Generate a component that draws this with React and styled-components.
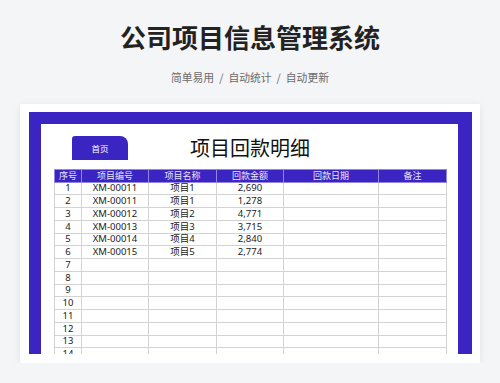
import styled, { createGlobalStyle } from "styled-components";

const GlobalStyle = createGlobalStyle`
    html, body{
        margin: 0;
        background: #f4f5f7;
        font-family: "Noto Sans", "Noto Sans CJK SC", sans-serif;
    }
`

const rows = [
    ["1", "XM-00011", "项目1", "2,690"],
    ["2", "XM-00011", "项目1", "1,278"],
    ["3", "XM-00012", "项目2", "4,771"],
    ["4", "XM-00013", "项目3", "3,715"],
    ["5", "XM-00014", "项目4", "2,840"],
    ["6", "XM-00015", "项目5", "2,774"],
]

const columns = [
    { name: "序号", width: 27 },
    { name: "项目编号", width: 67 },
    { name: "项目名称", width: 68 },
    { name: "回款金额", width: 67 },
    { name: "回款日期", width: 95 },
    { name: "备注", width: 68 },
]

const App = () => {
    const all = [...rows]
    for (let i = 7; i <= 14; i++) all.push([String(i), "", "", ""])

    return (
        <>
            <GlobalStyle />
            <Header>
                <h1>公司项目信息管理系统</h1>
                <Tags>
                    <span>简单易用</span>
                    <Slash>/</Slash>
                    <span>自动统计</span>
                    <Slash>/</Slash>
                    <span>自动更新</span>
                </Tags>
            </Header>

            <Card>
                <Frame>
                    <Inner>
                        <TitleRow>
                            <HomeTab>首页</HomeTab>
                            <h2>项目回款明细</h2>
                            <div></div>
                        </TitleRow>
                        <Table>
                            <colgroup>
                                {columns.map((c) => (
                                    <col key={c.name} style={{ width: c.width }} />
                                ))}
                            </colgroup>
                            <thead>
                                <tr>
                                    {columns.map((c) => (
                                        <th key={c.name}>{c.name}</th>
                                    ))}
                                </tr>
                            </thead>
                            <tbody>
                                {all.map((r) => (
                                    <tr key={r[0]}>
                                        <td>{r[0]}</td>
                                        <td>{r[1]}</td>
                                        <td>{r[2]}</td>
                                        <td>{r[3]}</td>
                                        <td></td>
                                        <td></td>
                                    </tr>
                                ))}
                            </tbody>
                        </Table>
                    </Inner>
                </Frame>
            </Card>
        </>
    );
}

const Header = styled.div`
    padding-top: 22px;
    text-align: center;

    h1{
        margin: 0;
        font-size: 26px;
        line-height: 30px;
        font-weight: 700;
        color: #222;
        font-family: "Noto Sans CJK SC", sans-serif;
    }
`

const Tags = styled.div`
    margin-top: 17px;
    height: 16px;
    font-size: 10.8px;
    line-height: 16px;
    color: #6b6b6b;
    font-family: "Noto Sans CJK SC", sans-serif;
`

const Slash = styled.span`
    margin: 0 5px;
`

const Card = styled.div`
    margin: 19px 20px 0;
    padding: 8px 8px 9px 9px;
    background: white;
    box-shadow: 0 2px 8px rgba(0, 0, 0, 0.08);
`

const Frame = styled.div`
    background: #3a24c2;
    padding: 12px 14px 0 12px;
`

const Inner = styled.div`
    background: white;
    height: 230px;
    padding: 12px 12px 0 13px;
    box-sizing: border-box;
    overflow: hidden;
`

const TitleRow = styled.div`
    display: grid;
    grid-template-columns: 1fr auto 1fr;
    align-items: center;
    height: 24px;
    margin-bottom: 9px;

    h2{
        margin: 0;
        font-size: 20px;
        font-weight: 400;
        color: #111;
        line-height: 24px;
        font-family: "Noto Sans CJK SC", sans-serif;
    }
`

const HomeTab = styled.div`
    width: 56px;
    height: 24px;
    margin-left: 18px;
    background: #3a24c2;
    border-radius: 3px 8px 0 0;
    color: white;
    font-size: 8.5px;
    line-height: 24px;
    text-align: center;
    font-family: "Noto Sans CJK SC", sans-serif;
`

const Table = styled.table`
    width: 392px;
    table-layout: fixed;
    border-collapse: collapse;
    font-size: 9.5px;
    color: #1a1a1a;

    thead tr{
        height: 12.5px;
    }

    tbody tr{
        height: 12.75px;
    }

    th{
        padding: 0;
        background: #3a24c2;
        color: #e8e6fa;
        font-weight: 400;
        font-size: 9px;
        line-height: 10px;
        border: 1px solid #9186e2;
        font-family: "Noto Sans CJK SC", sans-serif;
    }

    td{
        padding: 0;
        text-align: center;
        line-height: 10px;
        border: 1px solid #d3d3d3;
        border-top-width: 1.5px;
    }
`

export default App;
